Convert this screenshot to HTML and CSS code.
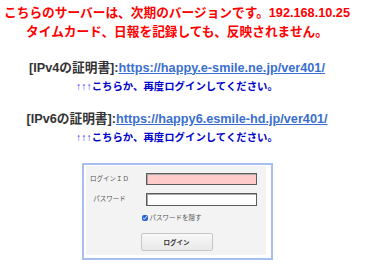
FILE: index.html
```html
<!DOCTYPE html>
<html lang="ja">
<head>
<meta charset="utf-8">
<title>ログイン</title>
<link rel="stylesheet" href="styles.css">
</head>
<body>
<div class="page">
  <p class="notice">こちらのサーバーは、次期のバージョンです。192.168.10.25<br>タイムカード、日報を記録しても、反映されません。</p>
  <p class="cert">[IPv4の証明書]:<a href="#">https://happy.e-smile.ne.jp/ver401/</a></p>
  <p class="hint"><span class="arrows">↑↑↑</span>こちらか、再度ログインしてください。</p>
  <p class="cert">[IPv6の証明書]:<a href="#">https://happy6.esmile-hd.jp/ver401/</a></p>
  <p class="hint"><span class="arrows">↑↑↑</span>こちらか、再度ログインしてください。</p>
  <form class="login-box">
    <div class="login-inner">
      <label class="lbl" for="uid">ログインＩＤ</label>
      <input class="field field-id" id="uid" type="text">
      <label class="lbl" for="pw">パスワード</label>
      <input class="field" id="pw" type="password">
      <div class="check-row">
        <input class="check" id="hide" type="checkbox" checked>
        <label class="check-lbl" for="hide">パスワードを隠す</label>
      </div>
      <div class="btn-row">
        <button class="btn" type="button">ログイン</button>
      </div>
    </div>
  </form>
</div>
</body>
</html>
```
FILE: styles.css
```css
html, body {
  margin: 0;
  background: #fff;
}
body {
  font-family: "Liberation Sans", "Noto Sans CJK JP", sans-serif;
}
.page {
  width: 354px;
  padding-top: 4px;
  text-align: center;
}
.notice {
  margin: 0;
  color: #f00;
  font-weight: bold;
  font-size: 12.7px;
  line-height: 19px;
}
.cert {
  margin: 16.5px 0 0;
  color: #333;
  font-weight: bold;
  font-size: 12.7px;
  line-height: 18px;
}
.cert a {
  color: #3a6fd0;
  text-decoration: underline;
}
.hint {
  margin: 2px 0 0;
  color: #0000cc;
  font-weight: bold;
  font-size: 10.4px;
  line-height: 15px;
}
.arrows {
  color: #3b3bff;
  font-weight: normal;
}
.login-box {
  box-sizing: border-box;
  width: 191px;
  height: 97px;
  margin: 17.5px auto 0;
  padding: 1px 5px 3px 2px;
  border: 2px solid #a6bfee;
}
.login-inner {
  height: 89px;
  box-sizing: border-box;
  padding-top: 7px;
  background: #f3f3f3;
  display: grid;
  grid-template-columns: 48px 111px;
  grid-template-rows: 12px 13px 10px 18px;
  column-gap: 12px;
  row-gap: 8px;
  align-items: center;
  align-content: start;
}
.lbl {
  text-align: center;
  font-size: 6.5px;
  color: #555;
  line-height: 10px;
}
.field {
  box-sizing: border-box;
  width: 111px;
  height: 100%;
  margin: 0;
  padding: 0;
  border: 1px solid #5c5c5c;
  box-shadow: inset 1px 1px 0 #a8a8a8;
  background: #fff;
}
.field-id {
  background: #ffcaca;
}
.check-row {
  grid-column: 1 / -1;
  display: flex;
  align-items: center;
  height: 10px;
  padding-left: 56px;
  margin-top: -2px;
}
.check {
  width: 6px;
  height: 6px;
  margin: 0 2px 0 0;
  accent-color: #2563d6;
}
.check-lbl {
  font-size: 6.5px;
  color: #555;
  line-height: 10px;
}
.btn-row {
  grid-column: 1 / -1;
  display: flex;
  height: 18px;
  padding-left: 55px;
  margin-top: 2px;
}
.btn {
  box-sizing: border-box;
  width: 72px;
  height: 18px;
  margin: 0;
  padding: 0;
  border: 1px solid #c6c6c6;
  border-radius: 2px;
  background: linear-gradient(#f8f8f8, #e8e8e8);
  font-family: "Liberation Sans", "Noto Sans CJK JP", sans-serif;
  font-size: 6.5px;
  font-weight: bold;
  color: #333;
}
```
